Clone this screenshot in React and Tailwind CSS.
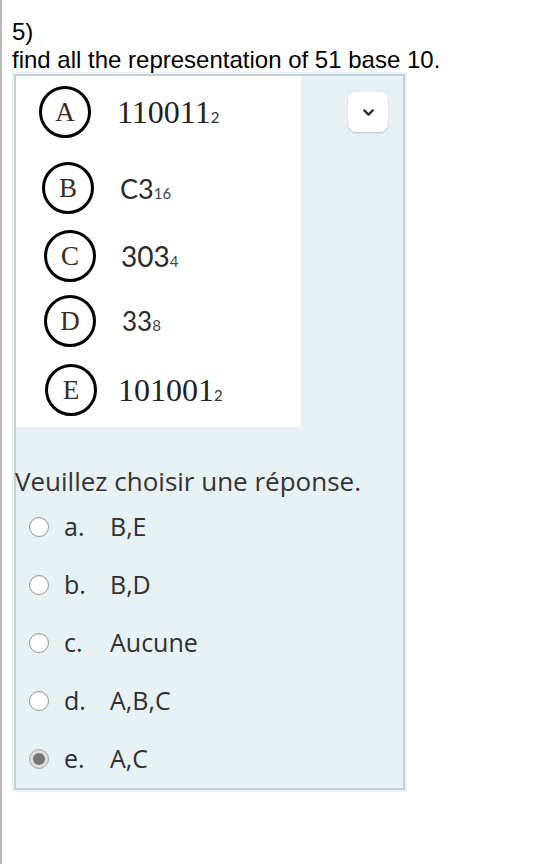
import { ChevronDown } from 'lucide-react';

const choices = [
  { letter: 'A', value: '110011', base: '2', serif: true, size: 'text-[32px]', mt: 'mt-[10px]', cl: 'ml-[23px]', tl: 'ml-[26px]' },
  { letter: 'B', value: 'C3', base: '16', serif: false, size: 'text-[27px]', mt: 'mt-[24px]', cl: 'ml-[26px]', tl: 'ml-[26px]' },
  { letter: 'C', value: '303', base: '4', serif: false, size: 'text-[28px]', mt: 'mt-[16px]', cl: 'ml-[28px]', tl: 'ml-[25px]' },
  { letter: 'D', value: '33', base: '8', serif: false, size: 'text-[26px]', mt: 'mt-[13px]', cl: 'ml-[28px]', tl: 'ml-[26px]' },
  { letter: 'E', value: '101001', base: '2', serif: true, size: 'text-[32px]', mt: 'mt-[17px]', cl: 'ml-[29px]', tl: 'ml-[21px]' },
];

const answers = [
  { key: 'a.', label: 'B,E' },
  { key: 'b.', label: 'B,D' },
  { key: 'c.', label: 'Aucune' },
  { key: 'd.', label: 'A,B,C' },
  { key: 'e.', label: 'A,C', checked: true },
];

function Radio({ checked }) {
  if (checked) {
    return (
      <span className="w-[20px] h-[20px] rounded-full bg-[#dcdcdc] border border-[#a5a5a5] flex items-center justify-center shrink-0">
        <span className="w-[12px] h-[12px] rounded-full bg-[#767676]" />
      </span>
    );
  }
  return (
    <span className="w-[20px] h-[20px] rounded-full bg-white border-[1.5px] border-[#959595] shadow-[inset_0_1px_1px_rgba(0,0,0,0.08)] shrink-0" />
  );
}

export default function App() {
  return (
    <div className="min-h-[864px] bg-white border-l-2 border-[#b9b9b9] font-['Liberation_Sans',Arial,sans-serif] text-black">
      <div className="pt-[18px] pl-[10px] text-[24px] leading-[27.6px]">
        <p>5)</p>
        <p>find all the representation of 51 base 10.</p>
      </div>

      {/* question box */}
      <div className="-mt-px ml-[10px] w-[395px] bg-[#e9f2f5] p-[2px]">
        <div className="relative border-2 border-[#c6d0d3] bg-[#e7f1f4]">
          <button className="absolute left-[332px] top-[16px] w-[40px] h-[40px] rounded-lg bg-white shadow-[0_1px_2px_rgba(0,0,0,0.18)] flex items-center justify-center">
            <ChevronDown size={17} strokeWidth={3.2} className="text-[#2a2a2a]" />
          </button>

          {/* picture of choices */}
          <div className="w-[285px] h-[351px] bg-white flex flex-col">
            {choices.map(c => (
              <div key={c.letter} className={`flex items-center ${c.mt}`}>
                <div className={`${c.cl} w-[52px] h-[52px] rounded-full border-[3px] border-black flex items-center justify-center shrink-0`}>
                  <span className="font-['Liberation_Serif',serif] text-[27px] leading-none text-[#3a2c1f]">{c.letter}</span>
                </div>
                {c.serif ? (
                  <span className={`${c.tl} font-['Liberation_Serif',serif] ${c.size} leading-none text-[#222]`}>
                    {c.value}
                    <span className="text-[15px] font-['Lato',sans-serif] text-[#333]">{c.base}</span>
                  </span>
                ) : (
                  <span className={`${c.tl} font-['Lato',sans-serif] ${c.size} leading-none text-[#2a2a2a]`}>
                    {c.value}
                    <span className="text-[15px] text-[#444]">{c.base}</span>
                  </span>
                )}
              </div>
            ))}
          </div>

          <p className="mt-[37px] -ml-[1px] font-['Open_Sans',sans-serif] text-[26px] leading-[34px] text-[#333]">
            Veuillez choisir une réponse.
          </p>

          <div className="flex flex-col">
            {answers.map(a => (
              <div key={a.key} className="h-[58px] flex items-center pl-[13px] font-['Open_Sans',sans-serif] text-[25px] text-[#2f2f2f]">
                <Radio checked={a.checked} />
                <span className="ml-[15px] w-[46px]">{a.key}</span>
                <span>{a.label}</span>
              </div>
            ))}
          </div>
        </div>
      </div>
    </div>
  );
}
